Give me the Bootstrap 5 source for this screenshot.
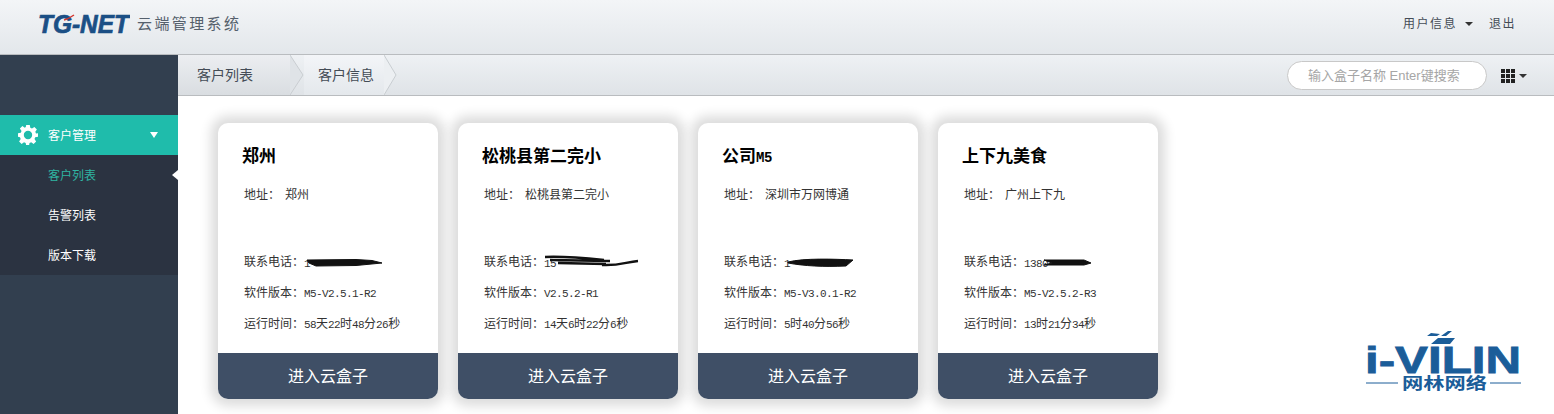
<!DOCTYPE html>
<html lang="zh-CN">

<head>
    <meta charset="UTF-8">
    <title>TG-NET 云端管理系统</title>
    <link href="https://cdn.jsdelivr.net/npm/bootstrap@5.3.3/dist/css/bootstrap.min.css" rel="stylesheet">
    <style>
        html, body {
            height: 414px;
            overflow: hidden;
        }

        body {
            font-family: "Liberation Sans", "Noto Sans CJK SC", sans-serif;
            font-size: 12px;
            color: #333;
            background: #fff;
        }

        .top-head {
            height: 55px;
            padding: 0 38px 6px;
            background: linear-gradient(#f3f5f7, #e3e7eb);
            border-bottom: 1px solid #b9bcbf;
        }

        .logo-svg {
            display: block;
            flex: none;
        }

        .logo-title {
            font-size: 15px;
            letter-spacing: 2.4px;
            color: #55606c;
            margin-left: 7px;
        }

        .head-links {
            color: #444c56;
            letter-spacing: 1.500px;
        }

        .caret-down {
            width: 0;
            height: 0;
            border-left: 4px solid transparent;
            border-right: 4px solid transparent;
            border-top: 4px solid #333;
        }

        .side-bar {
            width: 178px;
            height: 359px;
            background: #323f4f;
            padding-top: 60px;
            flex: none;
        }

        .side-main {
            height: 40px;
            background: #1fbcab;
            color: #fff;
            padding-left: 18px;
        }

        .side-main-label {
            margin-left: 10px;
            padding-top: 2px;
        }

        .side-tri {
            width: 0;
            height: 0;
            margin-left: 54px;
            border-left: 4px solid transparent;
            border-right: 4px solid transparent;
            border-top: 6px solid #fff;
        }

        .side-sub {
            background: #2b3341;
        }

        .side-item {
            height: 40px;
            padding-left: 48px;
            color: #fff;
            line-height: 42px;
            position: relative;
        }

        .side-item.is-on {
            color: #2fb5a2;
        }

        .side-item.is-on::after {
            content: "";
            position: absolute;
            right: 0;
            top: 15px;
            border-top: 5px solid transparent;
            border-bottom: 5px solid transparent;
            border-right: 6px solid #fff;
        }

        .crumb-bar {
            height: 41px;
            background: linear-gradient(#eef1f4, #dfe3e7);
            border-bottom: 1px solid #b9bcbf;
            padding-right: 27px;
        }

        .crumb-one {
            height: 40px;
            width: 112px;
            padding-left: 19px;
            line-height: 40px;
            font-size: 14px;
            color: #444c56;
            background: linear-gradient(#eceef1, #d9dde1);
        }

        .crumb-two {
            height: 40px;
            width: 80px;
            padding-left: 14px;
            line-height: 40px;
            font-size: 14px;
            color: #444c56;
            background: linear-gradient(#f3f5f8, #e4e8ec);
        }

        .crumb-sep {
            flex: none;
            display: block;
        }

        .crumb-tools {
            margin-top: 6px;
        }

        .search-box {
            width: 200px;
            height: 29px;
            border: 1px solid #c8c8c8;
            border-radius: 15px;
            background: #fff;
            padding: 0 20px;
            color: #a6a6a6;
            font-size: 13px;
            line-height: 27px;
            white-space: nowrap;
        }

        .grid-ico {
            display: grid;
            grid-template-columns: repeat(3, 4px);
            gap: 1px;
            margin-left: 14px;
        }

        .grid-ico i {
            width: 4px;
            height: 4px;
            background: #222;
            display: block;
        }

        .box-list {
            padding: 27px 0 0 40px;
        }

        .box-item {
            width: 220px;
            height: 276px;
            border-radius: 10px;
            background: #fff;
            box-shadow: 0 0 12px 7px #dcdcdc;
            margin-right: 20px;
            overflow: hidden;
        }

        .box-body {
            height: 230px;
            padding: 0 0 0 26px;
        }

        .box-name {
            font-size: 17px;
            font-weight: 700;
            color: #000;
            margin-left: -2px;
            line-height: 22px;
            padding-top: 23px;
            height: 45px;
        }

        .box-addr {
            height: 79px;
            padding-top: 18px;
            line-height: 18px;
        }

        .box-row {
            height: 31px;
            line-height: 31px;
            white-space: nowrap;
        }

        .addr-val {
            margin-left: 5px;
        }

        .latin {
            font-family: "Liberation Mono", monospace;
            font-size: 11px;
            letter-spacing: -0.6px;
        }

        .name-latin {
            font-size: 14px;
            letter-spacing: -0.4px;
        }

        .phone-mask {
            display: inline-block;
            position: relative;
            height: 12px;
            line-height: 12px;
            vertical-align: middle;
        }

        .phone-mask svg {
            position: absolute;
            left: 0;
            top: -4px;
        }

        .box-foot {
            height: 46px;
            line-height: 47px;
            background: #3f4f66;
            color: #fff;
            text-align: center;
            font-size: 16px;
        }

        .brand-mark {
            flex: none;
            margin: 234px 33px 0 auto;
        }
    </style>
</head>

<body>
    <div class="top-head d-flex align-items-center">
        <svg class="logo-svg" width="92" height="30" viewBox="0 0 92 30">
            <text x="0" y="24" font-family="Liberation Sans" font-style="italic" font-weight="700" font-size="25" fill="#1b4f85" stroke="#1b4f85" stroke-width="0.7" textLength="91" lengthAdjust="spacingAndGlyphs">TG-NET</text>
            <path d="M26 11C30 10 33 8 36 6" fill="none" stroke="#d5332a" stroke-width="1.500" />
        </svg>
        <div class="logo-title">云端管理系统</div>
        <div class="head-links d-flex align-items-center gap-2 ms-auto">
            <span>用户信息</span>
            <span class="caret-down"></span>
            <span class="ms-2">退出</span>
        </div>
    </div>

    <div class="d-flex">
        <div class="side-bar">
            <div class="side-main d-flex align-items-center">
                <svg width="20" height="20" viewBox="0 0 20 20">
                    <path fill="#fff" fill-rule="evenodd" d="M8.2 0h3.6l.5 2.8 1.7.7L16.400 1.900l2.500 2.500-1.600 2.400.7 1.700L20 8.200v3.600l-2.800.5-.7 1.700 1.600 2.400-2.500 2.500-2.400-1.600-1.700.7-.5 2.800H8.200l-.5-2.800-1.700-.7-2.400 1.600L1.100 16.400l1.600-2.400-.7-1.700L0 11.800V8.200l2.800-.5.7-1.700L1.900 3.600 4.400 1.100l2.400 1.600 1-.7zM10 5.800a4.200 4.200 0 1 0 0 8.400 4.200 4.200 0 0 0 0-8.400z" />
                </svg>
                <span class="side-main-label">客户管理</span>
                <span class="side-tri"></span>
            </div>
            <div class="side-sub">
                <div class="side-item is-on">客户列表</div>
                <div class="side-item">告警列表</div>
                <div class="side-item">版本下载</div>
            </div>
        </div>

        <div class="flex-grow-1">
            <div class="crumb-bar d-flex align-items-start">
                <div class="crumb-one">客户列表</div>
                <svg class="crumb-sep" width="14" height="40" viewBox="0 0 14 40">
                    <path d="M0 0L13 20L0 40Z" fill="#dfe3e7" />
                    <path d="M0 0L13 20L0 40" fill="none" stroke="#c9cdd1" />
                </svg>
                <div class="crumb-two">客户信息</div>
                <svg class="crumb-sep" width="14" height="40" viewBox="0 0 14 40">
                    <path d="M0 0L12 20L0 40Z" fill="#ecEff2" />
                    <path d="M0 0L12 20L0 40" fill="none" stroke="#c9cdd1" />
                </svg>
                <div class="crumb-tools ms-auto d-flex align-items-center">
                    <div class="search-box">输入盒子名称 Enter键搜索</div>
                    <div class="grid-ico"><i></i><i></i><i></i><i></i><i></i><i></i><i></i><i></i><i></i></div>
                    <span class="caret-down ms-1"></span>
                </div>
            </div>

            <div class="d-flex">
                <div class="box-list d-flex">
                    <div class="box-item">
                        <div class="box-body">
                            <div class="box-name">郑州</div>
                            <div class="box-addr">地址：<span class="addr-val">郑州</span></div>
                            <div class="box-row">联系电话：<span class="phone-mask"><span class="latin">1</span><svg width="80" height="20" viewBox="0 0 80 20"><path d="M3 7L52 6.500L68 7.500L78 10L52 12.500L12 13L5 10Z" fill="#111" stroke="#111" /></svg></span></div>
                            <div class="box-row">软件版本：<span class="latin">M5-V2.5.1-R2</span></div>
                            <div class="box-row">运行时间：<span class="latin">58</span>天<span class="latin">22</span>时<span class="latin">48</span>分<span class="latin">26</span>秒</div>
                        </div>
                        <div class="box-foot">进入云盒子</div>
                    </div>
                    <div class="box-item">
                        <div class="box-body">
                            <div class="box-name">松桃县第二完小</div>
                            <div class="box-addr">地址：<span class="addr-val">松桃县第二完小</span></div>
                            <div class="box-row">联系电话：<span class="phone-mask"><span class="latin">15</span><svg width="96" height="20" viewBox="0 0 96 20"><path d="M1 4C20 3 40 5 60 7M6 7L66 8M14 10L62 11" fill="none" stroke="#111" stroke-width="2.500" /><path d="M58 12C75 13 82 9 94 8" fill="none" stroke="#111" stroke-width="2.500" /></svg></span></div>
                            <div class="box-row">软件版本：<span class="latin">V2.5.2-R1</span></div>
                            <div class="box-row">运行时间：<span class="latin">14</span>天<span class="latin">6</span>时<span class="latin">22</span>分<span class="latin">6</span>秒</div>
                        </div>
                        <div class="box-foot">进入云盒子</div>
                    </div>
                    <div class="box-item">
                        <div class="box-body">
                            <div class="box-name">公司<span class="latin name-latin">M5</span></div>
                            <div class="box-addr">地址：<span class="addr-val">深圳市万网博通</span></div>
                            <div class="box-row">联系电话：<span class="phone-mask"><span class="latin">1</span><svg width="72" height="20" viewBox="0 0 72 20"><path d="M4 9C20 5 50 6 69 7L62 13C40 14 20 13 4 10Z" fill="#111" stroke="#111" /></svg></span></div>
                            <div class="box-row">软件版本：<span class="latin">M5-V3.0.1-R2</span></div>
                            <div class="box-row">运行时间：<span class="latin">5</span>时<span class="latin">40</span>分<span class="latin">56</span>秒</div>
                        </div>
                        <div class="box-foot">进入云盒子</div>
                    </div>
                    <div class="box-item">
                        <div class="box-body">
                            <div class="box-name">上下九美食</div>
                            <div class="box-addr">地址：<span class="addr-val">广州上下九</span></div>
                            <div class="box-row">联系电话：<span class="phone-mask"><span class="latin">1380</span><svg width="70" height="20" viewBox="0 0 70 20"><path d="M20 7L60 7L67 10L60 12L20 12L28 10Z" fill="#111" stroke="#111" /></svg></span></div>
                            <div class="box-row">软件版本：<span class="latin">M5-V2.5.2-R3</span></div>
                            <div class="box-row">运行时间：<span class="latin">13</span>时<span class="latin">21</span>分<span class="latin">34</span>秒</div>
                        </div>
                        <div class="box-foot">进入云盒子</div>
                    </div>
                </div>

                <svg class="brand-mark" width="156" height="66" viewBox="0 0 156 66">
                    <path d="M76 6L83 1H87L81 6H76ZM66 14L73 8H90L85 14ZM75 4L72 6H62L66 3Z" fill="#1b5d99" />
                    <text x="0" y="43" font-family="Liberation Sans" font-weight="700" font-size="37" fill="#1b5d99" stroke="#1b5d99" stroke-width="0.8" textLength="156" lengthAdjust="spacingAndGlyphs">i-VILIN</text>
                    <path d="M1 53H33M125 53H156" stroke="#1b5d99" stroke-width="1" />
                    <text x="37" y="59" font-family="Noto Sans CJK SC" font-weight="700" font-size="16" fill="#1b5d99" textLength="85" lengthAdjust="spacingAndGlyphs">网林网络</text>
                </svg>
            </div>
        </div>
    </div>
    <script src="https://cdn.jsdelivr.net/npm/bootstrap@5.3.3/dist/js/bootstrap.bundle.min.js"></script>
</body>

</html>
